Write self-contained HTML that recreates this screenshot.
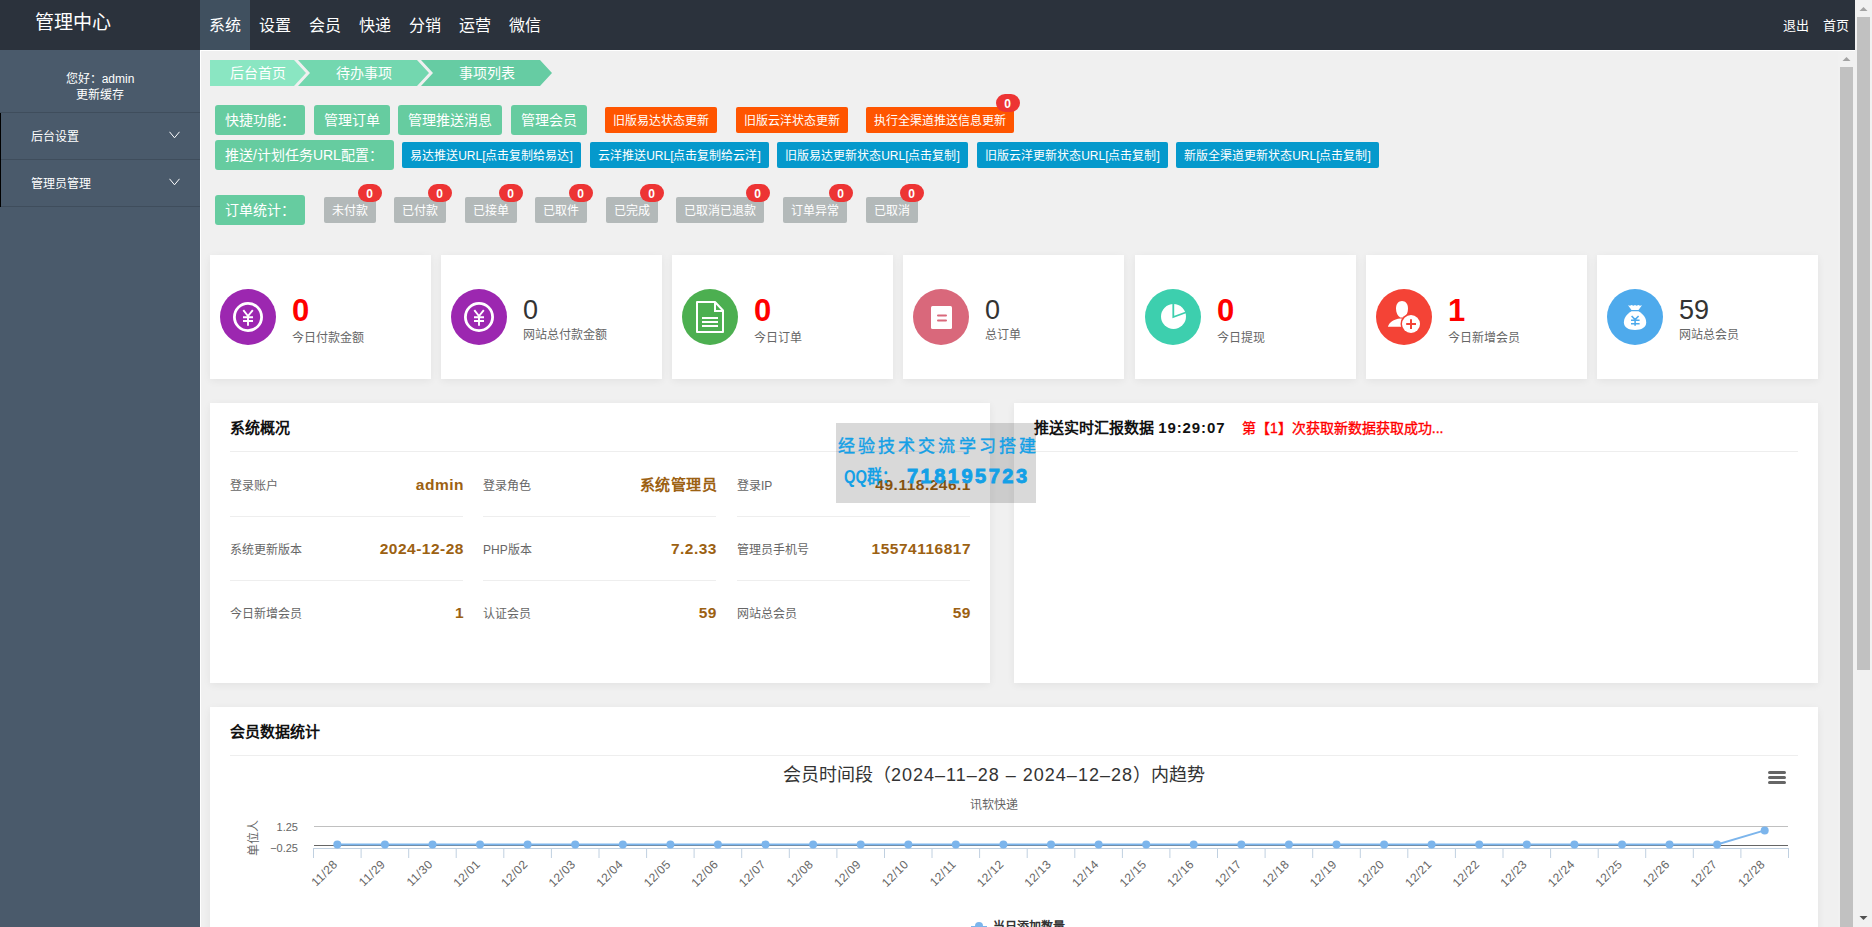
<!DOCTYPE html>
<html lang="zh-CN">
<head>
<meta charset="utf-8">
<title>管理中心</title>
<style>
*{box-sizing:border-box;margin:0;padding:0}
html,body{width:1872px;height:927px;overflow:hidden}
body{font-family:"Liberation Sans",sans-serif;background:#f0f0f0;position:relative;color:#333;font-size:12px}
.a{position:absolute}
.c{text-align:center;white-space:nowrap}
#hdr{left:0;top:0;width:1855px;height:50px;background:#2b323c}
#logo{left:35px;top:10px;font-size:19px;line-height:26px;color:#fff}
.nav{top:0;width:50px;height:50px;line-height:52px;font-size:16px;color:#fff;text-align:center}
.nav.on{background:#40505f}
.hr{top:17px;font-size:13px;line-height:18px;color:#fff}
#side{left:0;top:50px;width:200px;height:877px;background:#4a5a6b}
.hello{left:0;width:200px;font-size:12px;line-height:16px;color:#fff;text-align:center}
.mi{left:0;width:200px;height:47px;border-bottom:1px solid #3f4d5c}
.mi span{position:absolute;left:31px;top:1px;line-height:47px;font-size:12px;color:#fff}
.chev{position:absolute;left:169px;top:18px;width:11px;height:8px}
#frame{left:200px;top:50px;width:1655px;height:877px;background:#f0f0f0;border-left:1px solid #fff;border-top:1px solid #fff}
.sb{background:#f1f1f1}
.thumb{background:#c1c1c1}
.btn{height:30px;line-height:30px;font-size:14px;color:#fff;background:#66cca0;border-radius:3px;text-align:center;white-space:nowrap}
.ob{top:107px;height:26px;line-height:28px;font-size:12px;color:#fff;background:#ff5500;border-radius:2px;text-align:center;white-space:nowrap}
.bb{top:142px;height:26px;line-height:28px;font-size:12px;color:#fff;background:#0599cc;border-radius:2px;text-align:center;white-space:nowrap}
.gb{top:197px;height:26px;line-height:28px;font-size:12px;color:#fff;background:#b3b9b9;border-radius:2px;text-align:center;white-space:nowrap}
.bd{width:24px;height:18px;line-height:20px;border-radius:9px;background:#ed3434;color:#fff;font-weight:bold;font-size:12px;text-align:center;padding-right:1px}
.card{top:255px;width:221px;height:124px;background:#fff;box-shadow:0 2px 8px rgba(0,0,0,0.06)}
.ic{position:absolute;left:10px;top:34px;width:56px;height:56px;border-radius:50%}
.ic svg{position:absolute;left:0;top:0}
.num{position:absolute;left:82px;font-size:27px;line-height:30px}
.num.r{color:#f00;font-weight:bold;top:40px;font-size:31px;line-height:32px}
.num.k{color:#333;top:40px}
.lbl{position:absolute;left:82px;font-size:12px;line-height:16px;color:#666;white-space:nowrap}
.panel{background:#fff;box-shadow:0 2px 8px rgba(0,0,0,0.06)}
.ptitle{font-size:15px;font-weight:bold;color:#111;line-height:20px;white-space:nowrap}
.line{height:1px;background:#eee}
.rl{font-size:12px;color:#666;line-height:16px;white-space:nowrap}
.rv{font-size:15.5px;letter-spacing:0.5px;color:#9c6112;font-weight:bold;line-height:20px;text-align:right;white-space:nowrap}
.axl{font-size:11px;color:#666;line-height:14px;white-space:nowrap}
</style>
</head>
<body>
<!-- header -->
<div id="hdr" class="a">
  <div id="logo" class="a">管理中心</div>
  <div class="a nav on" style="left:200px">系统</div>
  <div class="a nav" style="left:250px">设置</div>
  <div class="a nav" style="left:300px">会员</div>
  <div class="a nav" style="left:350px">快递</div>
  <div class="a nav" style="left:400px">分销</div>
  <div class="a nav" style="left:450px">运营</div>
  <div class="a nav" style="left:500px">微信</div>
  <div class="a hr" style="left:1783px">退出</div>
  <div class="a hr" style="left:1823px">首页</div>
</div>
<!-- outer scrollbar -->
<div class="a sb" style="left:1855px;top:0;width:17px;height:927px"></div>
<div class="a thumb" style="left:1857px;top:17px;width:13px;height:653px"></div>
<svg class="a" style="left:1855px;top:0" width="17" height="17"><polygon points="4.5,11 12.5,11 8.5,7" fill="#a3a3a3"/></svg>
<svg class="a" style="left:1855px;top:910px" width="17" height="17"><polygon points="4.5,6 12.5,6 8.5,10" fill="#505050"/></svg>

<!-- sidebar -->
<div id="side" class="a">
  <div class="a hello" style="top:21px">您好：admin</div>
  <div class="a hello" style="top:37px">更新缓存</div>
  <div class="a" style="left:0;top:62px;width:200px;height:1px;background:#3f4d5c"></div>
  <div class="a mi" style="top:63px"><span>后台设置</span><svg class="chev" viewBox="0 0 11 8"><polyline points="0.5,0.8 5.5,6.8 10.5,0.8" fill="none" stroke="#fff" stroke-width="1"/></svg></div>
  <div class="a mi" style="top:110px"><span>管理员管理</span><svg class="chev" viewBox="0 0 11 8"><polyline points="0.5,0.8 5.5,6.8 10.5,0.8" fill="none" stroke="#fff" stroke-width="1"/></svg></div>
  <div class="a" style="left:0;top:63px;width:1px;height:94px;background:#000"></div>
</div>

<!-- content frame -->
<div id="frame" class="a"></div>
<!-- inner scrollbar -->
<div class="a sb" style="left:1838px;top:51px;width:17px;height:876px"></div>
<div class="a thumb" style="left:1840px;top:67px;width:13px;height:860px"></div>
<svg class="a" style="left:1838px;top:51px" width="17" height="17"><polygon points="4.5,10 12.5,10 8.5,6" fill="#a3a3a3"/></svg>

<!-- CONTENT -->
<!-- breadcrumb -->
<svg class="a" style="left:0;top:0" width="600" height="100">
  <polygon points="210,60 294,60 306,73 294,86 210,86" fill="#8ae6c2"/>
  <polygon points="298,60 417,60 429,73 417,86 298,86 310,73" fill="#73d7af"/>
  <polygon points="421,60 540,60 552,73 540,86 421,86 433,73" fill="#66cca3"/>
</svg>
<div class="a c" style="left:210px;top:64px;width:96px;font-size:14px;line-height:18px;color:#fff">后台首页</div>
<div class="a c" style="left:310px;top:64px;width:107px;font-size:14px;line-height:18px;color:#fff">待办事项</div>
<div class="a c" style="left:433px;top:64px;width:107px;font-size:14px;line-height:18px;color:#fff">事项列表</div>

<!-- quick row -->
<div class="a btn" style="left:215px;top:105px;width:90px;text-align:left;padding-left:10px">快捷功能：</div>
<div class="a btn" style="left:314px;top:105px;width:76px">管理订单</div>
<div class="a btn" style="left:398px;top:105px;width:104px">管理推送消息</div>
<div class="a btn" style="left:511px;top:105px;width:76px">管理会员</div>
<div class="a ob" style="left:605px;width:112px">旧版易达状态更新</div>
<div class="a ob" style="left:736px;width:112px">旧版云洋状态更新</div>
<div class="a ob" style="left:866px;width:148px">执行全渠道推送信息更新</div>
<div class="a bd" style="left:996px;top:94px">0</div>

<!-- url row -->
<div class="a btn" style="left:215px;top:140px;width:179px;text-align:left;padding-left:10px">推送/计划任务URL配置：</div>
<div class="a bb" style="left:402px;width:179px">易达推送URL[点击复制给易达]</div>
<div class="a bb" style="left:590px;width:179px">云洋推送URL[点击复制给云洋]</div>
<div class="a bb" style="left:777px;width:191px">旧版易达更新状态URL[点击复制]</div>
<div class="a bb" style="left:977px;width:191px">旧版云洋更新状态URL[点击复制]</div>
<div class="a bb" style="left:1176px;width:203px">新版全渠道更新状态URL[点击复制]</div>

<!-- order stats -->
<div class="a btn" style="left:215px;top:195px;width:90px;text-align:left;padding-left:10px">订单统计：</div>
<div class="a gb" style="left:324px;width:52px">未付款</div><div class="a bd" style="left:358px;top:184px">0</div>
<div class="a gb" style="left:394px;width:52px">已付款</div><div class="a bd" style="left:428px;top:184px">0</div>
<div class="a gb" style="left:465px;width:52px">已接单</div><div class="a bd" style="left:499px;top:184px">0</div>
<div class="a gb" style="left:535px;width:52px">已取件</div><div class="a bd" style="left:569px;top:184px">0</div>
<div class="a gb" style="left:606px;width:52px">已完成</div><div class="a bd" style="left:640px;top:184px">0</div>
<div class="a gb" style="left:676px;width:88px">已取消已退款</div><div class="a bd" style="left:746px;top:184px">0</div>
<div class="a gb" style="left:783px;width:64px">订单异常</div><div class="a bd" style="left:829px;top:184px">0</div>
<div class="a gb" style="left:866px;width:52px">已取消</div><div class="a bd" style="left:900px;top:184px">0</div>

<!-- stat cards -->
<div class="a card" style="left:210px"><div class="ic" style="background:#9c27b0"><svg width="56" height="56"><circle cx="28" cy="28" r="13.6" fill="none" stroke="#fff" stroke-width="2.8"/><path d="M23.3 21.2 L28 27 L32.8 21.2 M23 28.2 H33 M23 32 H33 M28 27 V36.7" fill="none" stroke="#fff" stroke-width="1.9"/></svg></div><div class="num r">0</div><div class="lbl" style="top:75px">今日付款金额</div></div>
<div class="a card" style="left:441px"><div class="ic" style="background:#9c27b0"><svg width="56" height="56"><circle cx="28" cy="28" r="13.6" fill="none" stroke="#fff" stroke-width="2.8"/><path d="M23.3 21.2 L28 27 L32.8 21.2 M23 28.2 H33 M23 32 H33 M28 27 V36.7" fill="none" stroke="#fff" stroke-width="1.9"/></svg></div><div class="num k">0</div><div class="lbl" style="top:72px">网站总付款金额</div></div>
<div class="a card" style="left:672px"><div class="ic" style="background:#4caf50"><svg width="56" height="56"><path d="M15 13 H33 L41 21.5 V43 H15 Z" fill="none" stroke="#fff" stroke-width="2" stroke-linejoin="round"/><path d="M33 13 V22 H41" fill="none" stroke="#fff" stroke-width="2"/><path d="M20 29 H36 M20 33 H36 M20 37 H36" stroke="#fff" stroke-width="2"/></svg></div><div class="num r">0</div><div class="lbl" style="top:75px">今日订单</div></div>
<div class="a card" style="left:903px"><div class="ic" style="background:#d9687b"><svg width="56" height="56"><rect x="18" y="17" width="21" height="23" rx="1.5" fill="#fff"/><path d="M25 26.5 H33 M25 31.4 H33" stroke="#d9687b" stroke-width="2" stroke-linecap="round"/></svg></div><div class="num k">0</div><div class="lbl" style="top:72px">总订单</div></div>
<div class="a card" style="left:1135px"><div class="ic" style="background:#3dcfae"><svg width="56" height="56"><circle cx="28.5" cy="27.5" r="12.5" fill="#fff"/><path d="M28.3 14 V28 L42 23" fill="none" stroke="#3dcfae" stroke-width="1.8"/></svg></div><div class="num r">0</div><div class="lbl" style="top:75px">今日提现</div></div>
<div class="a card" style="left:1366px"><div class="ic" style="background:#f44336"><svg width="56" height="56"><path d="M24.2 28.6 C21.6 26.8 20 23.6 20 19.4 C20 14.6 22.6 11.9 26 11.9 C29.4 11.9 32 14.6 32 19.4 C32 23.6 30.4 26.8 27.8 28.6 Z" fill="#fff"/><path d="M11.9 37.8 C13 33.6 17.5 30.2 24.5 29.6 L29 30 L29 37.8 Z" fill="#fff"/><circle cx="35" cy="35" r="10.5" fill="#f44336"/><circle cx="35" cy="35" r="9" fill="#fff"/><path d="M30.2 35 H40 M35 30.2 V40" stroke="#f44336" stroke-width="2"/></svg></div><div class="num r">1</div><div class="lbl" style="top:75px">今日新增会员</div></div>
<div class="a card" style="left:1597px"><div class="ic" style="background:#4eaaec"><svg width="56" height="56"><path d="M21 16.2 L23 16.8 L24.5 16 L26.5 16.8 L28 16 L29.5 16.8 L31.5 16 L33 16.8 L35 16.2 L31.5 20.9 H24.5 Z" fill="#fff"/><path d="M24.5 22.2 H31.5 C36 25 39.2 28.5 39.2 33.5 C39.2 38.5 34.5 40.9 28 40.9 C21.5 40.9 16.9 38.5 16.9 33.5 C16.9 28.5 20 25 24.5 22.2 Z" fill="#fff"/><path d="M24.6 27 L28.1 30.6 L31.6 27 M24 31.2 H32.6 M24 34.7 H32.6 M28.1 30.4 V36.7" fill="none" stroke="#4eaaec" stroke-width="1.6"/></svg></div><div class="num k">59</div><div class="lbl" style="top:72px">网站总会员</div></div>

<!-- system panel -->
<div class="a panel" style="left:210px;top:403px;width:780px;height:280px"></div>
<div class="a ptitle" style="left:230px;top:418px">系统概况</div>
<div class="a line" style="left:230px;top:451px;width:740px"></div>
<div class="a rl" style="left:230px;top:478px">登录账户</div><div class="a rv" style="left:231px;top:475px;width:233px">admin</div>
<div class="a line" style="left:230px;top:516px;width:233px"></div>
<div class="a rl" style="left:483px;top:478px">登录角色</div><div class="a rv" style="left:484px;top:475px;width:233px"><span style="font-size:15px">系统管理员</span></div>
<div class="a line" style="left:483px;top:516px;width:233px"></div>
<div class="a rl" style="left:737px;top:478px">登录IP</div><div class="a rv" style="left:738px;top:475px;width:233px">49.118.246.1</div>
<div class="a line" style="left:737px;top:516px;width:233px"></div>
<div class="a rl" style="left:230px;top:542px">系统更新版本</div><div class="a rv" style="left:231px;top:539px;width:233px">2024-12-28</div>
<div class="a line" style="left:230px;top:580px;width:233px"></div>
<div class="a rl" style="left:483px;top:542px">PHP版本</div><div class="a rv" style="left:484px;top:539px;width:233px">7.2.33</div>
<div class="a line" style="left:483px;top:580px;width:233px"></div>
<div class="a rl" style="left:737px;top:542px">管理员手机号</div><div class="a rv" style="left:738px;top:539px;width:233px">15574116817</div>
<div class="a line" style="left:737px;top:580px;width:233px"></div>
<div class="a rl" style="left:230px;top:606px">今日新增会员</div><div class="a rv" style="left:231px;top:603px;width:233px">1</div>
<div class="a rl" style="left:483px;top:606px">认证会员</div><div class="a rv" style="left:484px;top:603px;width:233px">59</div>
<div class="a rl" style="left:737px;top:606px">网站总会员</div><div class="a rv" style="left:738px;top:603px;width:233px">59</div>

<!-- realtime panel -->
<div class="a panel" style="left:1014px;top:403px;width:804px;height:280px"></div>
<div class="a ptitle" style="left:1034px;top:418px">推送实时汇报数据 <span style="letter-spacing:0.9px">19:29:07</span></div>
<div class="a" style="left:1242px;top:419px;font-size:14px;line-height:18px;color:#f00;white-space:nowrap;-webkit-text-stroke:0.35px #f00">第【1】次获取新数据获取成功...</div>
<div class="a line" style="left:1034px;top:451px;width:764px"></div>

<!-- watermark -->
<div class="a" style="left:836px;top:423px;width:200px;height:80px;background:rgba(0,0,0,0.15)"></div>
<div class="a" style="left:838px;top:437px;font-family:'Liberation Serif',serif;font-size:17px;line-height:20px;letter-spacing:3.1px;color:#14a0e6;white-space:nowrap;-webkit-text-stroke:0.4px #14a0e6">经验技术交流学习搭建</div>
<div class="a" style="left:844px;top:466px;font-size:18px;line-height:22px;color:#14a0e6;white-space:nowrap;font-weight:bold;transform:scaleX(0.82);transform-origin:left top">QQ群：</div>
<div class="a" style="left:907px;top:465px;font-size:20px;line-height:22px;color:#14a0e6;white-space:nowrap;font-weight:bold;letter-spacing:2.5px;-webkit-text-stroke:0.9px #14a0e6">718195723</div>

<!-- member stats panel -->
<div class="a panel" style="left:210px;top:707px;width:1608px;height:240px"></div>
<div class="a ptitle" style="left:230px;top:722px">会员数据统计</div>
<div class="a line" style="left:230px;top:755px;width:1568px"></div>
<div class="a c" style="left:694px;top:764px;width:600px;font-size:18px;line-height:22px;color:#333">会员时间段（<span style="letter-spacing:1px">2024–11–28 – 2024–12–28</span>）内趋势</div>
<div class="a c" style="left:894px;top:797px;width:200px;font-size:12px;line-height:16px;color:#666">讯软快递</div>
<svg class="a" style="left:0;top:0" width="1872" height="927">
<path d="M1769.5 772.5 H1784.5 M1769.5 777.5 H1784.5 M1769.5 782.5 H1784.5" stroke="#666" stroke-width="3" stroke-linecap="round"/>
<line x1="314" y1="826.5" x2="1788" y2="826.5" stroke="#c0c0c0" stroke-width="1"/>
<line x1="314" y1="845.5" x2="1788" y2="845.5" stroke="#666" stroke-width="1"/>
<line x1="313" y1="848.5" x2="1789" y2="848.5" stroke="#c0d0e0" stroke-width="1"/>
<path d="M313.5 848 V858 M361.1 848 V858 M408.7 848 V858 M456.2 848 V858 M503.8 848 V858 M551.4 848 V858 M599.0 848 V858 M646.6 848 V858 M694.1 848 V858 M741.7 848 V858 M789.3 848 V858 M836.9 848 V858 M884.5 848 V858 M932.0 848 V858 M979.6 848 V858 M1027.2 848 V858 M1074.8 848 V858 M1122.4 848 V858 M1169.9 848 V858 M1217.5 848 V858 M1265.1 848 V858 M1312.7 848 V858 M1360.3 848 V858 M1407.8 848 V858 M1455.4 848 V858 M1503.0 848 V858 M1550.6 848 V858 M1598.2 848 V858 M1645.7 848 V858 M1693.3 848 V858 M1740.9 848 V858 M1788.5 848 V858 " stroke="#c0d0e0" stroke-width="1"/>
<polyline points="337.3,844.4 384.9,844.4 432.5,844.4 480.0,844.4 527.6,844.4 575.2,844.4 622.8,844.4 670.4,844.4 717.9,844.4 765.5,844.4 813.1,844.4 860.7,844.4 908.3,844.4 955.8,844.4 1003.4,844.4 1051.0,844.4 1098.6,844.4 1146.2,844.4 1193.7,844.4 1241.3,844.4 1288.9,844.4 1336.5,844.4 1384.1,844.4 1431.6,844.4 1479.2,844.4 1526.8,844.4 1574.4,844.4 1622.0,844.4 1669.5,844.4 1717.1,844.4 1764.7,830.4" fill="none" stroke="#7cb5ec" stroke-width="2"/>
<circle cx="337.3" cy="844.4" r="4" fill="#7cb5ec"/><circle cx="384.9" cy="844.4" r="4" fill="#7cb5ec"/><circle cx="432.5" cy="844.4" r="4" fill="#7cb5ec"/><circle cx="480.0" cy="844.4" r="4" fill="#7cb5ec"/><circle cx="527.6" cy="844.4" r="4" fill="#7cb5ec"/><circle cx="575.2" cy="844.4" r="4" fill="#7cb5ec"/><circle cx="622.8" cy="844.4" r="4" fill="#7cb5ec"/><circle cx="670.4" cy="844.4" r="4" fill="#7cb5ec"/><circle cx="717.9" cy="844.4" r="4" fill="#7cb5ec"/><circle cx="765.5" cy="844.4" r="4" fill="#7cb5ec"/><circle cx="813.1" cy="844.4" r="4" fill="#7cb5ec"/><circle cx="860.7" cy="844.4" r="4" fill="#7cb5ec"/><circle cx="908.3" cy="844.4" r="4" fill="#7cb5ec"/><circle cx="955.8" cy="844.4" r="4" fill="#7cb5ec"/><circle cx="1003.4" cy="844.4" r="4" fill="#7cb5ec"/><circle cx="1051.0" cy="844.4" r="4" fill="#7cb5ec"/><circle cx="1098.6" cy="844.4" r="4" fill="#7cb5ec"/><circle cx="1146.2" cy="844.4" r="4" fill="#7cb5ec"/><circle cx="1193.7" cy="844.4" r="4" fill="#7cb5ec"/><circle cx="1241.3" cy="844.4" r="4" fill="#7cb5ec"/><circle cx="1288.9" cy="844.4" r="4" fill="#7cb5ec"/><circle cx="1336.5" cy="844.4" r="4" fill="#7cb5ec"/><circle cx="1384.1" cy="844.4" r="4" fill="#7cb5ec"/><circle cx="1431.6" cy="844.4" r="4" fill="#7cb5ec"/><circle cx="1479.2" cy="844.4" r="4" fill="#7cb5ec"/><circle cx="1526.8" cy="844.4" r="4" fill="#7cb5ec"/><circle cx="1574.4" cy="844.4" r="4" fill="#7cb5ec"/><circle cx="1622.0" cy="844.4" r="4" fill="#7cb5ec"/><circle cx="1669.5" cy="844.4" r="4" fill="#7cb5ec"/><circle cx="1717.1" cy="844.4" r="4" fill="#7cb5ec"/><circle cx="1764.7" cy="830.4" r="4" fill="#7cb5ec"/>
<text x="338.3" y="865" transform="rotate(-45 338.3 865)" text-anchor="end" font-family="Liberation Sans, sans-serif" font-size="12" letter-spacing="0.4" fill="#666">11/28</text><text x="385.9" y="865" transform="rotate(-45 385.9 865)" text-anchor="end" font-family="Liberation Sans, sans-serif" font-size="12" letter-spacing="0.4" fill="#666">11/29</text><text x="433.5" y="865" transform="rotate(-45 433.5 865)" text-anchor="end" font-family="Liberation Sans, sans-serif" font-size="12" letter-spacing="0.4" fill="#666">11/30</text><text x="481.0" y="865" transform="rotate(-45 481.0 865)" text-anchor="end" font-family="Liberation Sans, sans-serif" font-size="12" letter-spacing="0.4" fill="#666">12/01</text><text x="528.6" y="865" transform="rotate(-45 528.6 865)" text-anchor="end" font-family="Liberation Sans, sans-serif" font-size="12" letter-spacing="0.4" fill="#666">12/02</text><text x="576.2" y="865" transform="rotate(-45 576.2 865)" text-anchor="end" font-family="Liberation Sans, sans-serif" font-size="12" letter-spacing="0.4" fill="#666">12/03</text><text x="623.8" y="865" transform="rotate(-45 623.8 865)" text-anchor="end" font-family="Liberation Sans, sans-serif" font-size="12" letter-spacing="0.4" fill="#666">12/04</text><text x="671.4" y="865" transform="rotate(-45 671.4 865)" text-anchor="end" font-family="Liberation Sans, sans-serif" font-size="12" letter-spacing="0.4" fill="#666">12/05</text><text x="718.9" y="865" transform="rotate(-45 718.9 865)" text-anchor="end" font-family="Liberation Sans, sans-serif" font-size="12" letter-spacing="0.4" fill="#666">12/06</text><text x="766.5" y="865" transform="rotate(-45 766.5 865)" text-anchor="end" font-family="Liberation Sans, sans-serif" font-size="12" letter-spacing="0.4" fill="#666">12/07</text><text x="814.1" y="865" transform="rotate(-45 814.1 865)" text-anchor="end" font-family="Liberation Sans, sans-serif" font-size="12" letter-spacing="0.4" fill="#666">12/08</text><text x="861.7" y="865" transform="rotate(-45 861.7 865)" text-anchor="end" font-family="Liberation Sans, sans-serif" font-size="12" letter-spacing="0.4" fill="#666">12/09</text><text x="909.3" y="865" transform="rotate(-45 909.3 865)" text-anchor="end" font-family="Liberation Sans, sans-serif" font-size="12" letter-spacing="0.4" fill="#666">12/10</text><text x="956.8" y="865" transform="rotate(-45 956.8 865)" text-anchor="end" font-family="Liberation Sans, sans-serif" font-size="12" letter-spacing="0.4" fill="#666">12/11</text><text x="1004.4" y="865" transform="rotate(-45 1004.4 865)" text-anchor="end" font-family="Liberation Sans, sans-serif" font-size="12" letter-spacing="0.4" fill="#666">12/12</text><text x="1052.0" y="865" transform="rotate(-45 1052.0 865)" text-anchor="end" font-family="Liberation Sans, sans-serif" font-size="12" letter-spacing="0.4" fill="#666">12/13</text><text x="1099.6" y="865" transform="rotate(-45 1099.6 865)" text-anchor="end" font-family="Liberation Sans, sans-serif" font-size="12" letter-spacing="0.4" fill="#666">12/14</text><text x="1147.2" y="865" transform="rotate(-45 1147.2 865)" text-anchor="end" font-family="Liberation Sans, sans-serif" font-size="12" letter-spacing="0.4" fill="#666">12/15</text><text x="1194.7" y="865" transform="rotate(-45 1194.7 865)" text-anchor="end" font-family="Liberation Sans, sans-serif" font-size="12" letter-spacing="0.4" fill="#666">12/16</text><text x="1242.3" y="865" transform="rotate(-45 1242.3 865)" text-anchor="end" font-family="Liberation Sans, sans-serif" font-size="12" letter-spacing="0.4" fill="#666">12/17</text><text x="1289.9" y="865" transform="rotate(-45 1289.9 865)" text-anchor="end" font-family="Liberation Sans, sans-serif" font-size="12" letter-spacing="0.4" fill="#666">12/18</text><text x="1337.5" y="865" transform="rotate(-45 1337.5 865)" text-anchor="end" font-family="Liberation Sans, sans-serif" font-size="12" letter-spacing="0.4" fill="#666">12/19</text><text x="1385.1" y="865" transform="rotate(-45 1385.1 865)" text-anchor="end" font-family="Liberation Sans, sans-serif" font-size="12" letter-spacing="0.4" fill="#666">12/20</text><text x="1432.6" y="865" transform="rotate(-45 1432.6 865)" text-anchor="end" font-family="Liberation Sans, sans-serif" font-size="12" letter-spacing="0.4" fill="#666">12/21</text><text x="1480.2" y="865" transform="rotate(-45 1480.2 865)" text-anchor="end" font-family="Liberation Sans, sans-serif" font-size="12" letter-spacing="0.4" fill="#666">12/22</text><text x="1527.8" y="865" transform="rotate(-45 1527.8 865)" text-anchor="end" font-family="Liberation Sans, sans-serif" font-size="12" letter-spacing="0.4" fill="#666">12/23</text><text x="1575.4" y="865" transform="rotate(-45 1575.4 865)" text-anchor="end" font-family="Liberation Sans, sans-serif" font-size="12" letter-spacing="0.4" fill="#666">12/24</text><text x="1623.0" y="865" transform="rotate(-45 1623.0 865)" text-anchor="end" font-family="Liberation Sans, sans-serif" font-size="12" letter-spacing="0.4" fill="#666">12/25</text><text x="1670.5" y="865" transform="rotate(-45 1670.5 865)" text-anchor="end" font-family="Liberation Sans, sans-serif" font-size="12" letter-spacing="0.4" fill="#666">12/26</text><text x="1718.1" y="865" transform="rotate(-45 1718.1 865)" text-anchor="end" font-family="Liberation Sans, sans-serif" font-size="12" letter-spacing="0.4" fill="#666">12/27</text><text x="1765.7" y="865" transform="rotate(-45 1765.7 865)" text-anchor="end" font-family="Liberation Sans, sans-serif" font-size="12" letter-spacing="0.4" fill="#666">12/28</text>
<text x="298" y="831" text-anchor="end" font-family="Liberation Sans, sans-serif" font-size="11" fill="#666">1.25</text>
<text x="298" y="852" text-anchor="end" font-family="Liberation Sans, sans-serif" font-size="11" fill="#666">−0.25</text>
<text x="258" y="838" transform="rotate(-90 258 838)" text-anchor="middle" font-family="Liberation Sans, sans-serif" font-size="12" fill="#666">单位人</text>
<path d="M971 927 H987" stroke="#7cb5ec" stroke-width="2"/>
<circle cx="979" cy="926" r="4" fill="#7cb5ec"/>
<text x="993" y="931" font-family="Liberation Sans, sans-serif" font-size="12" font-weight="bold" fill="#333">当日添加数量</text>
</svg>
</body>
</html>
